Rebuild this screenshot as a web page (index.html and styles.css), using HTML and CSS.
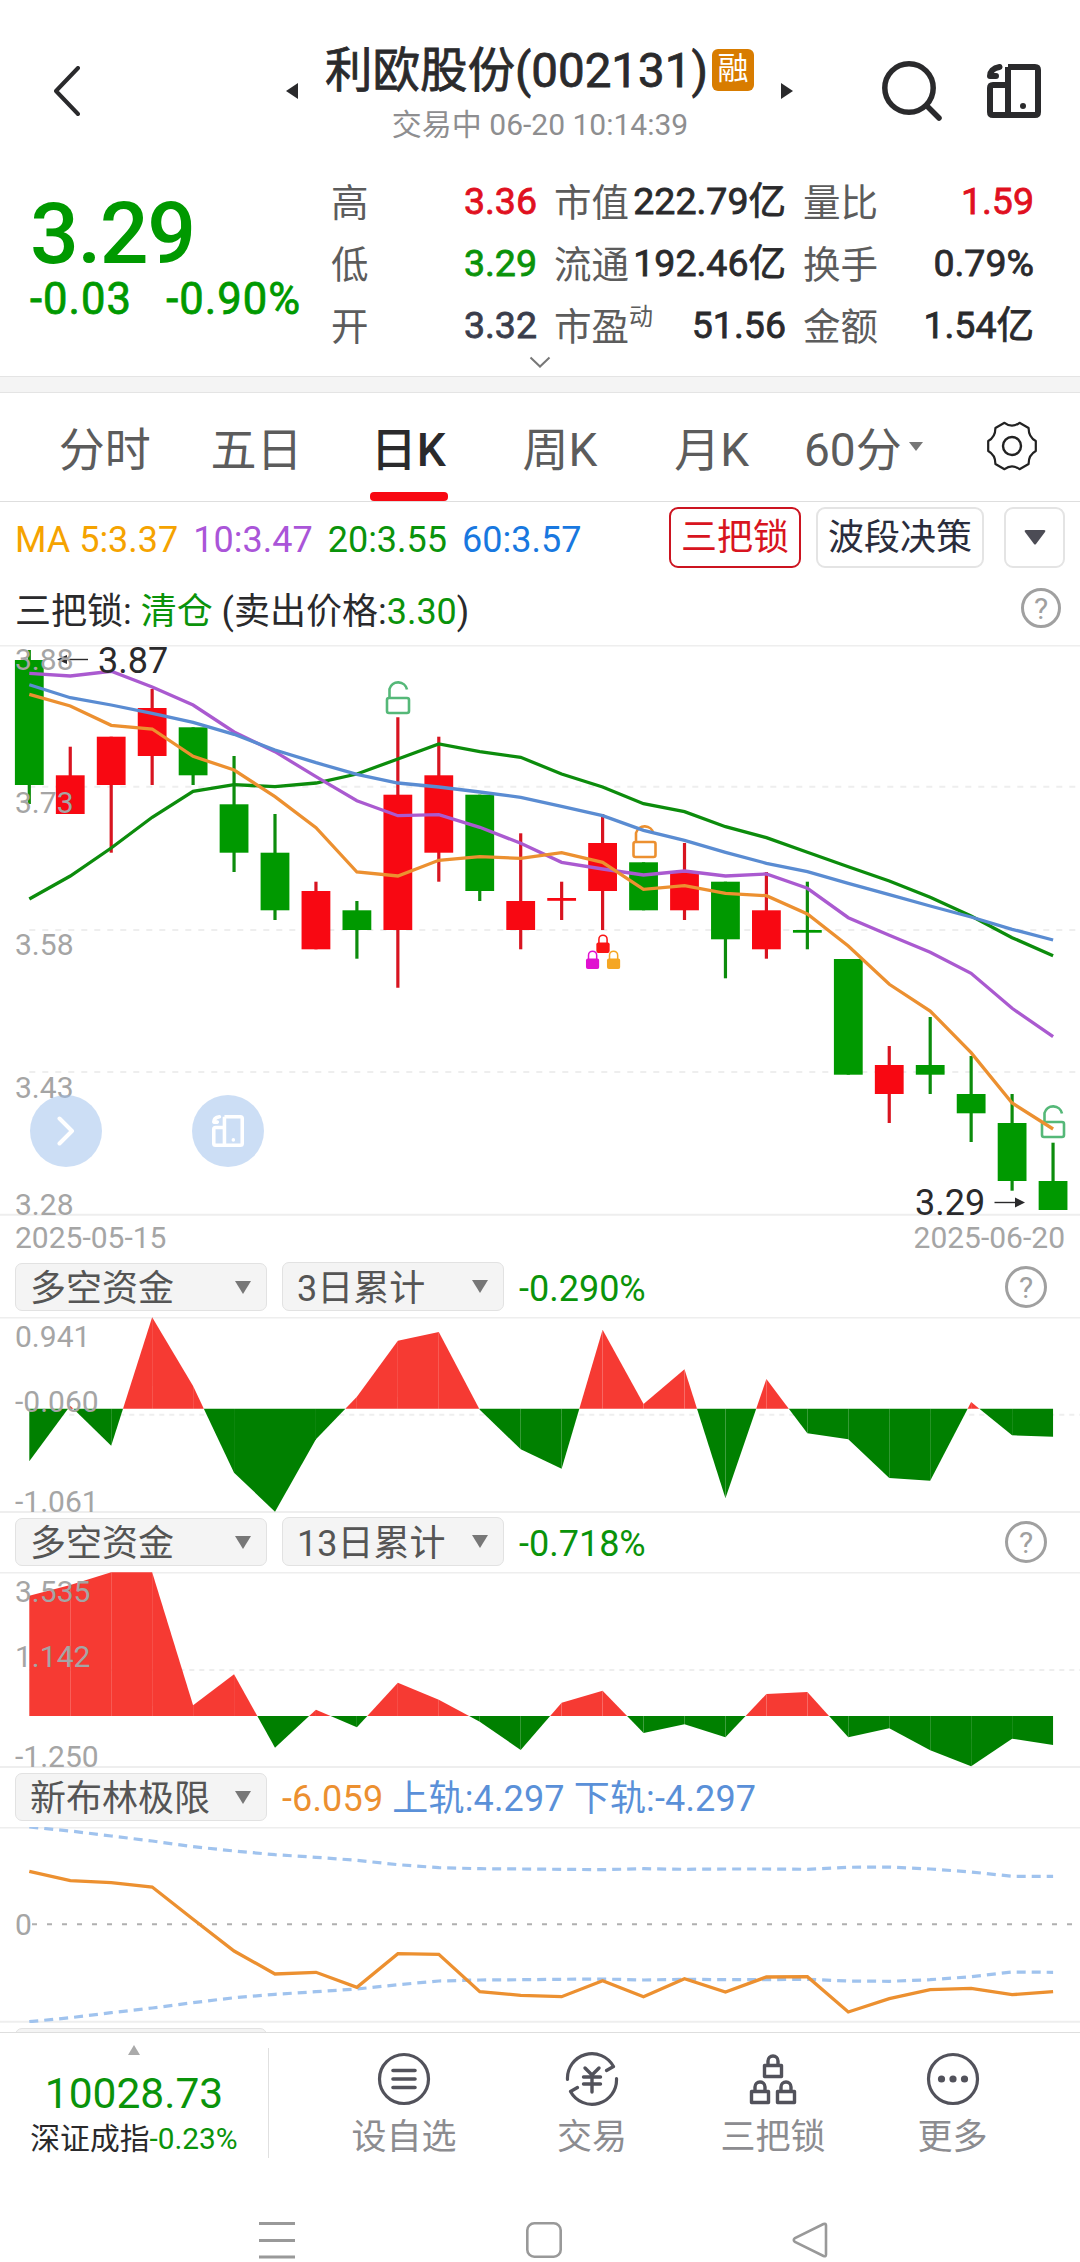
FILE: index.html
```html
<!DOCTYPE html>
<html lang="zh-CN">
<head>
    <meta charset="UTF-8">
    <meta name="viewport" content="width=device-width, initial-scale=1.0">
    <title>利欧股份(002131)</title>
    <link rel="stylesheet" href="styles.css">
</head>
<body>
    <!-- Shared icons -->
    <svg class="icon-defs" width="0" height="0">
        <symbol id="icon-rotate" viewBox="0 0 54 54">
            <path d="M21 3H48Q51 3 51 6V48Q51 51 48 51H6Q3 51 3 48V24Q3 21 6 21H21M21 3V51" fill="none" stroke="currentColor" stroke-width="6"/>
            <path d="M12.500 3C6 4 3 8 3 12H9" fill="none" stroke="currentColor" stroke-width="6" stroke-linecap="round" stroke-linejoin="round"/>
            <circle cx="36" cy="42" r="3" fill="currentColor"/>
        </symbol>
        <symbol id="icon-open-lock" viewBox="0 0 26 38">
            <rect x="2" y="19" width="22" height="15" rx="2" fill="none" stroke="currentColor" stroke-width="2.600"/>
            <path d="M4.500 19V10A9 9 0 0 1 22 10.500" fill="none" stroke="currentColor" stroke-width="2.600"/>
        </symbol>
        <symbol id="icon-lock" viewBox="0 0 14 20">
            <rect x="0" y="9" width="14" height="11" rx="2" fill="currentColor"/>
            <path d="M2.700 10V5.500A4.300 4.300 0 0 1 11.300 5.500V10" fill="none" stroke="currentColor" stroke-width="1.600"/>
        </symbol>
    </svg>

    <header class="header">
        <svg class="back" width="26" height="50" viewBox="0 0 26 50"><path d="M24 2L2 25L24 48" fill="none" stroke="#2a2a2c" stroke-width="4" stroke-linecap="round" stroke-linejoin="round"/></svg>
        <svg class="prev" width="12" height="16" viewBox="0 0 12 16"><path d="M12 0V16L0 8Z" fill="#2a2a2c"/></svg>
        <div class="title">
            <h1>利欧股份(002131)<span class="badge">融</span></h1>
            <p>交易中 06-20 10:14:39</p>
        </div>
        <svg class="next" width="12" height="16" viewBox="0 0 12 16"><path d="M0 0V16L12 8Z" fill="#2a2a2c"/></svg>
        <svg class="search" width="60" height="60" viewBox="0 0 60 60"><g fill="none" stroke="#2a2a2c" stroke-width="5.500" stroke-linecap="round"><circle cx="27" cy="27" r="24.200"/><path d="M45 45L57 57"/></g></svg>
        <svg class="rotate" width="54" height="54"><use href="#icon-rotate"/></svg>
    </header>

    <section class="quote">
        <div class="price">
            <div class="price-now">3.29</div>
            <div class="price-change"><span>-0.03</span><span>-0.90%</span></div>
        </div>
        <div class="stats">
            <div class="stat"><label>高</label><b class="red">3.36</b></div>
            <div class="stat"><label>市值</label><b>222.79亿</b></div>
            <div class="stat"><label>量比</label><b class="red">1.59</b></div>
            <div class="stat"><label>低</label><b class="green">3.29</b></div>
            <div class="stat"><label>流通</label><b>192.46亿</b></div>
            <div class="stat"><label>换手</label><b>0.79%</b></div>
            <div class="stat"><label>开</label><b class="flat">3.32</b></div>
            <div class="stat"><label>市盈<sup>动</sup></label><b>51.56</b></div>
            <div class="stat"><label>金额</label><b>1.54亿</b></div>
        </div>
        <svg class="more" width="22" height="12" viewBox="0 0 22 12"><path d="M1.500 1.500L11 10.500L20.500 1.500" fill="none" stroke="#777" stroke-width="2"/></svg>
    </section>

    <nav class="tabs">
        <a class="tab">分时</a>
        <a class="tab">五日</a>
        <a class="tab active">日K</a>
        <a class="tab">周K</a>
        <a class="tab">月K</a>
        <a class="tab">60分<svg class="caret" width="14" height="9" viewBox="0 0 14 9"><path d="M0 0H14L7 9Z" fill="#777"/></svg></a>
        <svg class="gear" width="52" height="52" viewBox="-26 -26 52 52">
            <path d="M23.800 -5V5Q16.500 9 16.600 18L7.500 23.200Q0 17.500 -7.500 23.200L-16.600 18Q-16.500 9 -23.800 5V-5Q-16.500 -9 -16.600 -18L-7.500 -23.200Q0 -17.500 7.500 -23.200L16.600 -18Q16.500 -9 23.800 -5Z" fill="none" stroke="#222" stroke-width="2.200" stroke-linejoin="round"/>
            <circle r="9" fill="none" stroke="#222" stroke-width="2.400"/>
        </svg>
    </nav>

    <div class="ma-row">
        <div class="ma">
            <span class="ma5">MA 5:3.37</span>
            <span class="ma10">10:3.47</span>
            <span class="ma20">20:3.55</span>
            <span class="ma60">60:3.57</span>
        </div>
        <button class="btn btn-active">三把锁</button>
        <button class="btn btn-wave">波段决策</button>
        <button class="btn btn-drop"><svg width="22" height="17" viewBox="0 0 22 17"><path d="M2 1H20Q22 1 21 3L12 15Q11 16 10 15L1 3Q0 1 2 1Z" fill="#4c4c55"/></svg></button>
    </div>
    <div class="signal-row">
        <p>三把锁: <span class="signal">清仓</span> (卖出价格:<span class="signal">3.30</span>)</p>
        <span class="help">?</span>
    </div>

    <div class="kline">
        <svg id="kline" width="1080" height="571" viewBox="0 645 1080 571"></svg>
        <div class="float-btn float-next"><svg width="18" height="30" viewBox="0 0 18 30"><path d="M2.500 2.500L15 15L2.500 27.500" fill="none" stroke="#fff" stroke-width="4" stroke-linecap="round" stroke-linejoin="round"/></svg></div>
        <div class="float-btn float-rotate"><svg width="32" height="32"><use href="#icon-rotate"/></svg></div>
    </div>
    <div class="dates"><span>2025-05-15</span><span>2025-06-20</span></div>

    <section class="panel">
        <div class="panel-head">
            <div class="select select-name"><span>多空资金</span><i></i></div>
            <div class="select select-period"><span>3日累计</span><i></i></div>
            <span class="value green">-0.290%</span>
            <span class="help">?</span>
        </div>
        <svg id="flow3" width="1080" height="196" viewBox="0 1317 1080 196"></svg>
    </section>

    <section class="panel">
        <div class="panel-head">
            <div class="select select-name"><span>多空资金</span><i></i></div>
            <div class="select select-period"><span>13日累计</span><i></i></div>
            <span class="value green">-0.718%</span>
            <span class="help">?</span>
        </div>
        <svg id="flow13" width="1080" height="196" viewBox="0 1572 1080 196"></svg>
    </section>

    <section class="panel">
        <div class="panel-head">
            <div class="select select-name"><span>新布林极限</span><i></i></div>
            <span class="value boll"><em>-6.059</em> 上轨:4.297 下轨:-4.297</span>
        </div>
        <svg id="boll" width="1080" height="196" viewBox="0 1827 1080 196"></svg>
    </section>
    <div class="panel-cut"><div class="select select-name"></div></div>

    <footer class="toolbar">
        <div class="index">
            <svg class="index-up" width="14" height="10" viewBox="0 0 14 10"><path d="M7 0L13 10H1Z" fill="#aaa"/></svg>
            <div class="index-value">10028.73</div>
            <div class="index-name">深证成指<span>-0.23%</span></div>
        </div>
        <div class="tool">
            <svg width="54" height="54" viewBox="-27 -27 54 54"><g fill="none" stroke="#52525b" stroke-width="3.200" stroke-linecap="round"><circle r="24.500"/><path d="M-11 -8.500H11M-11 0H11M-11 8.500H11" stroke-width="3.600"/></g></svg>
            <span>设自选</span>
        </div>
        <div class="tool">
            <svg width="54" height="54" viewBox="-27 -27 54 54"><g fill="none" stroke="#52525b" stroke-width="3.200" stroke-linecap="round" stroke-linejoin="round"><path d="M-24.500 0.500A24.500 24.500 0 0 1 21.500 -12.500L14.500 -8.500M24.500 -0.500A24.500 24.500 0 0 1 -21.500 12.500L-14.500 8.500"/><path d="M-7 -11L0 -4L7 -11M0 -4V13M-8.500 -2H8.500M-8.500 5H8.500" stroke-width="3.400"/></g></svg>
            <span>交易</span>
        </div>
        <div class="tool">
            <svg width="54" height="54" viewBox="-27 -27 54 54"><g fill="none" stroke="#52525b" stroke-width="3.400" stroke-linejoin="round"><path d="M-8.500 -13.500H8.500V-2.500H-8.500ZM-5 -14V-18A5 5 0 0 1 5 -18V-14"/><path d="M-21.500 12.500H-4.500V23.500H-21.500ZM-18 12V8A5 5 0 0 1 -8 8V12"/><path d="M4.500 12.500H21.500V23.500H4.500ZM8 12V8A5 5 0 0 1 18 8V12"/></g></svg>
            <span>三把锁</span>
        </div>
        <div class="tool">
            <svg width="54" height="54" viewBox="-27 -27 54 54"><circle r="24.500" fill="none" stroke="#52525b" stroke-width="3.200"/><g fill="#52525b"><circle cx="-11.500" r="3.600"/><circle r="3.600"/><circle cx="11.500" r="3.600"/></g></svg>
            <span>更多</span>
        </div>
    </footer>

    <div class="system-nav">
        <svg width="36" height="37" viewBox="0 0 36 37"><path d="M0 1.500H36M0 18.500H36M0 35H36" stroke="#999" stroke-width="3"/></svg>
        <svg width="36" height="36" viewBox="0 0 36 36"><rect x="1.300" y="1.300" width="33.400" height="33.400" rx="7" fill="none" stroke="#999" stroke-width="2.600"/></svg>
        <svg width="36" height="36" viewBox="0 0 36 36"><path d="M31.500 2Q34 1 34 3.500V32.500Q34 35 31.500 34L3 20Q0.500 18 3 16Z" fill="none" stroke="#999" stroke-width="2.600"/></svg>
    </div>

    <script src="charts.js"></script>
</body>
</html>
```
FILE: styles.css
```css
* {
    margin: 0;
    padding: 0;
    box-sizing: border-box;
}

body {
    width: 1080px;
    height: 2262px;
    overflow: hidden;
    background: #fff;
    color: #2a2a2c;
    font-family: Roboto, 'Noto Sans CJK SC', sans-serif;
}

svg {
    display: block;
    flex-shrink: 0;
}

.icon-defs {
    position: absolute;
}

.red {
    color: #e01020;
}

.green {
    color: #0a930a;
}

/* Header */
.header {
    height: 158px;
    padding: 24px 39px 0 54px;
    display: flex;
    align-items: center;
}

.prev {
    margin-left: 206px;
}

.title {
    width: 430px;
    margin: 4px 26px 0 27px;
    text-align: center;
    white-space: nowrap;
}

.title h1 {
    display: flex;
    align-items: center;
    height: 64px;
    font-size: 47.5px;
    font-weight: 400;
    line-height: 64px;
    -webkit-text-stroke: 0.8px currentColor;
}

.badge {
    width: 42px;
    height: 42px;
    margin: -3px 1px 0 auto;
    border-radius: 6px;
    background: #d87c00;
    color: #fff;
    font-size: 31px;
    font-weight: 400;
    line-height: 40px;
    -webkit-text-stroke: 0;
}

.title p {
    height: 44px;
    color: #8e8e90;
    font-size: 30px;
    line-height: 44px;
}

.search {
    margin: -1px 0 0 89px;
}

.rotate {
    margin: 0 0 0 auto;
}

/* Quote */
.quote {
    height: 235px;
    padding: 12px 45px 0 30px;
    display: grid;
    grid-template-columns: 301px 1fr;
    grid-template-rows: 186px 22px 1fr;
    border-bottom: 1px solid #e4e4e4;
    background: linear-gradient(#fff 218px, #e4e4e4 218px, #e4e4e4 219px, #f4f4f4 219px);
}

.price {
    padding-top: 20px;
    color: #009900;
}

.price-now {
    height: 88px;
    font-size: 86px;
    font-weight: 500;
    line-height: 88px;
    letter-spacing: -1.5px;
}

.price-change {
    display: flex;
    justify-content: space-between;
    width: 271px;
    font-size: 43.5px;
    line-height: 44px;
    letter-spacing: 1px;
    white-space: nowrap;
    -webkit-text-stroke: 0.8px currentColor;
}

.stats {
    display: grid;
    grid-template-columns: 206px 232px 231px;
    grid-template-rows: repeat(3, 62px);
    column-gap: 17px;
}

.stat {
    display: flex;
    justify-content: space-between;
    font-size: 37.5px;
    line-height: 62px;
    white-space: nowrap;
}

.stat label {
    color: #5c5c5c;
    padding-top: 2px;
}

.stat b {
    font-weight: 400;
    -webkit-text-stroke: 0.8px currentColor;
}

.stat sup {
    display: inline-block;
    font-size: 24px;
    line-height: 24px;
    vertical-align: 15px;
}

.flat {
    color: #3a3d4c;
}

.more {
    grid-column: 1 / 3;
    margin: 0 0 0 499px;
}

/* Tabs */
.tabs {
    height: 109px;
    padding-left: 29px;
    display: grid;
    grid-template-columns: repeat(6, 151.7px) 1fr;
    align-items: center;
    justify-items: center;
    border-bottom: 1px solid #dedede;
}

.tab {
    height: 108px;
    display: flex;
    align-items: center;
    position: relative;
    color: #5c5c5c;
    font-size: 46px;
    padding-bottom: 2px;
}

.tab.active {
    color: #2a2a2c;
    font-weight: 500;
}

.tab.active::after {
    content: '';
    position: absolute;
    left: -1px;
    bottom: 0;
    width: 78px;
    height: 9px;
    border-radius: 4px;
    background: #f80812;
}

.caret {
    margin-left: 7px;
}

.gear {
    margin: -2px 0 0 5px;
}

/* Moving averages and buttons */
.ma-row {
    height: 71px;
    padding: 0 15px 0 15px;
    display: flex;
    align-items: center;
}

.ma {
    display: flex;
    gap: 15px;
    width: 654px;
    padding-top: 4px;
    font-size: 36px;
    white-space: nowrap;
}

.ma5 {
    color: #f5a300;
}

.ma10 {
    color: #aa55d8;
}

.ma20 {
    color: #0a930a;
}

.ma60 {
    color: #1878e0;
}

.btn {
    height: 61px;
    border: 2px solid #e4e4e4;
    border-radius: 9px;
    background: #fff;
    color: #2a2d3c;
    font-family: inherit;
    font-size: 36px;
    line-height: 56px;
    white-space: nowrap;
}

.btn-active {
    width: 132px;
    border-color: #cc1420;
    color: #d81420;
}

.btn-wave {
    width: 168px;
    margin-left: 15px;
}

.btn-drop {
    width: 61px;
    margin-left: auto;
    display: flex;
    align-items: center;
    justify-content: center;
}

.signal-row {
    height: 72px;
    padding: 0 19px 3px 15px;
    display: flex;
    align-items: center;
    justify-content: space-between;
    font-size: 36px;
}

.signal {
    color: #0a930a;
}

.help {
    width: 40px;
    height: 40px;
    border: 3px solid #a0a0a0;
    border-radius: 50%;
    color: #a0a0a0;
    font-size: 30px;
    line-height: 35px;
    text-align: center;
}

/* Candlestick chart */
.kline {
    height: 571px;
    position: relative;
}

.float-btn {
    width: 72px;
    height: 72px;
    position: absolute;
    top: 450px;
    display: flex;
    align-items: center;
    justify-content: center;
    border-radius: 50%;
    background: rgba(153, 189, 236, 0.5);
    color: #fff;
}

.float-next {
    left: 30px;
}

.float-rotate {
    left: 192px;
}

.dates {
    height: 46px;
    padding: 0 15px;
    display: flex;
    justify-content: space-between;
    color: #a5a5a5;
    font-size: 30px;
    line-height: 43px;
}

.axis {
    fill: #a5a5a5;
    font-size: 30px;
}

.mark {
    fill: #2a2a2c;
    font-size: 36px;
}

/* Indicator panels */
.panel {
    height: 255px;
}

.panel-head {
    height: 55px;
    padding: 1px 33px 0 15px;
    display: flex;
}

.select {
    height: 48px;
    padding: 0 15px 0 14px;
    display: flex;
    align-items: center;
    justify-content: space-between;
    border: 1px solid #e2e2e2;
    border-radius: 7px;
    background: #f4f4f4;
    color: #555;
    font-size: 36px;
    line-height: 48px;
    white-space: nowrap;
}

.select span {
    padding-top: 4px;
}

.select i {
    border: 8px solid transparent;
    border-top: 13px solid #777;
    border-bottom: 0;
}

.select-name {
    width: 252px;
}

.select-period {
    width: 222px;
    height: 49px;
    margin: -1px 0 0 15px;
}

.value {
    margin-left: 15px;
    font-size: 36px;
    line-height: 52px;
    white-space: nowrap;
}

.boll {
    color: #5a90d8;
    letter-spacing: 0.15px;
}

.boll em {
    color: #ec9030;
    font-style: normal;
}

.panel-head .help {
    width: 42px;
    height: 42px;
    margin: 3px 0 0 auto;
    line-height: 37px;
}

.panel-cut {
    height: 5px;
    padding: 1px 0 0 15px;
    overflow: hidden;
}

/* Bottom toolbar */
.toolbar {
    height: 142px;
    display: grid;
    grid-template-columns: 313px 182px 194px 168px 191px;
    border-top: 1px solid #dedede;
}

.index {
    width: 269px;
    height: 110px;
    margin-top: 15px;
    display: flex;
    flex-direction: column;
    align-items: center;
    border-right: 1px solid #e0e0e0;
}

.index-up {
    margin-top: -3px;
}

.index-value {
    margin-top: 15px;
    color: #0a930a;
    font-size: 42.5px;
    line-height: 48px;
}

.index-name {
    font-size: 29.800px;
    line-height: 42px;
    white-space: nowrap;
}

.index-name span {
    color: #0a930a;
}

.tool {
    padding-top: 19px;
    display: flex;
    flex-direction: column;
    align-items: center;
    color: #8c8c90;
    font-size: 35px;
    line-height: 40px;
}

.tool span {
    margin-top: 12px;
}

/* System navigation */
.system-nav {
    height: 88px;
    padding: 48px 252px 0 259px;
    display: flex;
    justify-content: space-between;
}
```
FILE: charts.js
```js
const NS = 'http://www.w3.org/2000/svg';
const START = 29.3;
const STEP = 40.95;
const RED = '#f80812';
const GREEN = '#009900';

const x = i => START + i * STEP;

function add(svg, tag, attrs, text) {
    const el = document.createElementNS(NS, tag);
    for (const key in attrs) {
        el.setAttribute(key, attrs[key]);
    }
    if (text) el.textContent = text;
    svg.appendChild(el);
}

function hline(svg, y, color, dash, from = 0) {
    add(svg, 'path', { d: `M${from} ${y}H1080`, stroke: color, 'stroke-width': 2, 'stroke-dasharray': dash || 'none' });
}

function line(svg, ys, color, width = 3.3, dash = 'none') {
    const points = ys.map((y, i) => `${x(i).toFixed(1)},${y}`).join(' ');
    add(svg, 'polyline', { points, fill: 'none', stroke: color, 'stroke-width': width, 'stroke-dasharray': dash });
}

// Candles: [up, high, body top, body bottom, low]
const candles = [
    [0, 650, 660, 785, 804], [1, 746.7, 775.3, 814, 814], [1, 736.7, 736.7, 785, 852.7],
    [1, 689, 708, 756, 785], [0, 727.3, 727.3, 775.3, 785], [0, 756, 804.3, 852.7, 872],
    [0, 814, 852.7, 910.3, 920], [1, 881.7, 891, 949.3, 949.3], [0, 901, 910.3, 930, 958.7],
    [1, 717.3, 794.7, 930, 987.7], [1, 736.7, 775.3, 852.7, 881.7], [0, 794.7, 794.7, 891, 901],
    [1, 833.3, 901, 930, 949.3], [1, 881.7, 898, 900.8, 920], [1, 814, 843, 891, 930],
    [0, 862.3, 862.3, 910.3, 910.3], [1, 843, 872, 910.3, 920], [0, 881.7, 881.7, 939.3, 978.3],
    [1, 872, 910.3, 949.3, 958.7], [0, 881.7, 930, 932.7, 949.3], [0, 959, 959, 1074.7, 1074.7],
    [1, 1046, 1065, 1094, 1123], [0, 1017, 1065, 1074.7, 1094], [0, 1056, 1094, 1113.3, 1142],
    [0, 1094, 1123, 1181, 1190.7], [0, 1142.7, 1181, 1210, 1210]
];

const ma5 = [694.3, 706, 725.3, 729, 756.3, 770, 796.7, 827.7, 872, 876, 860.3, 856.7, 858.3, 852.7, 862.3, 889.3, 885.7, 893.3, 895.7, 914, 946, 984.3, 1011, 1052.7, 1103, 1129];
const ma10 = [673.3, 676, 671.3, 687, 705, 732, 751.7, 776.7, 800.7, 815.7, 814.7, 827.3, 843.3, 862.3, 869, 875, 871, 876, 874, 888.3, 917.7, 935.3, 952.3, 973.3, 1008.3, 1036.7];
const ma20 = [899, 876, 848, 817.3, 791.3, 784.7, 786.7, 783, 774, 759, 744, 751.7, 757.3, 774, 787, 803.7, 811.7, 826.7, 837.7, 852.3, 866.7, 881, 897.3, 916, 937.7, 955.7];
const ma60 = [684.7, 697.7, 705, 713.3, 722.3, 734.3, 750, 762.7, 774.3, 783, 787, 792, 797.3, 806.3, 815.7, 830.3, 840.3, 852.3, 863.3, 871.7, 883.3, 894.7, 906, 917, 929.3, 940];

function openLock(svg, cx, top, color) {
    add(svg, 'use', { href: '#icon-open-lock', x: cx - 13, y: top, width: 26, height: 38, color });
}

function drawKline() {
    const svg = document.getElementById('kline');
    hline(svg, 645.5, '#eeeeee');
    [786.7, 930, 1072].forEach(y => hline(svg, y, '#eeeeee', '6 7', START));
    hline(svg, 1214.7, '#eeeeee');

    candles.forEach(([up, high, top, bottom, low], i) => {
        add(svg, 'path', { d: `M${x(i)} ${high}V${low}`, stroke: up ? '#d81420' : '#0c8c0c', 'stroke-width': 3.2 });
        add(svg, 'rect', { x: x(i) - 14.4, y: top, width: 28.8, height: bottom - top, fill: up ? RED : GREEN });
    });

    openLock(svg, 398, 679, '#55b878');
    openLock(svg, 644.5, 823, '#ec9030');
    openLock(svg, 1053, 1103, '#55b878');
    [[596, 934, '#fa1414'], [585.6, 950, '#e010d0'], [606.6, 950, '#f5a623']].forEach(([lx, ly, color]) => {
        add(svg, 'use', { href: '#icon-lock', x: lx, y: ly, width: 14, height: 19, color });
    });

    line(svg, ma20, '#0c8c0c');
    line(svg, ma10, '#aa5ad0');
    line(svg, ma60, '#5a8cd2');
    line(svg, ma5, '#ec9030');

    // High and low markers
    add(svg, 'path', { d: 'M88 659.5H62', stroke: '#2a2a2c', 'stroke-width': 1.4 });
    add(svg, 'path', { d: 'M57 659.5L67 655V664Z', fill: '#2a2a2c' });
    add(svg, 'text', { x: 98, y: 672.7, class: 'mark' }, '3.87');
    add(svg, 'text', { x: 915, y: 1215, class: 'mark' }, '3.29');
    add(svg, 'path', { d: 'M994.5 1202.5H1018', stroke: '#2a2a2c', 'stroke-width': 1.4 });
    add(svg, 'path', { d: 'M1025 1202.5L1015 1197.5V1207.5Z', fill: '#2a2a2c' });

    [['3.88', 669.7], ['3.73', 812.7], ['3.58', 954.5], ['3.43', 1097.7], ['3.28', 1215]].forEach(([t, y]) => {
        add(svg, 'text', { x: 15, y, class: 'axis' }, t);
    });
}

// Red area above the zero line, green area below it
function drawFlow(id, ys, zero, grid, labels) {
    const svg = document.getElementById(id);
    const top = svg.viewBox.baseVal.y;
    hline(svg, top + 0.5, '#eeeeee');
    hline(svg, grid, '#eeeeee', '5 5', START);
    hline(svg, top + 195, '#eeeeee');

    for (let i = 0; i < ys.length - 1; i++) {
        const a = ys[i] - zero;
        const b = ys[i + 1] - zero;
        const color = v => (v < 0 ? '#f63a33' : '#008000');
        if (a * b < 0) {
            const cross = x(i) + STEP * a / (a - b);
            add(svg, 'polygon', { points: `${x(i)},${zero} ${x(i)},${ys[i]} ${cross},${zero}`, fill: color(a) });
            add(svg, 'polygon', { points: `${cross},${zero} ${x(i + 1)},${ys[i + 1]} ${x(i + 1)},${zero}`, fill: color(b) });
        } else {
            add(svg, 'polygon', { points: `${x(i)},${zero} ${x(i)},${ys[i]} ${x(i + 1)},${ys[i + 1]} ${x(i + 1)},${zero}`, fill: color(a || b) });
        }
    }
    labels.forEach(([t, y]) => add(svg, 'text', { x: 15, y, class: 'axis' }, t));
}

function drawBoll() {
    const svg = document.getElementById('boll');
    hline(svg, 1827.5, '#eeeeee');
    hline(svg, 2021.7, '#eeeeee');
    hline(svg, 1924.3, '#b0b0b0', '5 10', 32);
    line(svg, [1827, 1831, 1836, 1841, 1846.7, 1851, 1854.7, 1857.3, 1860.3, 1864.7, 1867.7, 1868.7, 1869, 1869.3, 1869.7, 1868.7, 1869.3, 1869, 1869, 1869.3, 1867.3, 1867, 1869, 1872, 1876.3, 1876.3], '#a0c3ee', 3.2, '9 6');
    line(svg, [2021.7, 2017.7, 2012.7, 2008, 2002.7, 1997.7, 1994.3, 1991.7, 1989, 1984.7, 1981, 1980, 1979.7, 1979.3, 1979, 1980, 1979.3, 1979.7, 1979.7, 1979.3, 1981, 1981.3, 1979.7, 1976.7, 1972, 1972.3], '#a0c3ee', 3.2, '9 6');
    line(svg, [1871.3, 1880.7, 1882.7, 1887, 1919.3, 1951, 1974, 1972.3, 1987.3, 1953.7, 1954.3, 1991.7, 1995.3, 1996.7, 1980.7, 1996.7, 1978.7, 1992, 1977, 1976.7, 2012, 1998.7, 1989.7, 1988.3, 1994.7, 1991.7], '#ec9030');
    add(svg, 'text', { x: 15, y: 1935, class: 'axis' }, '0');
}

drawKline();
drawFlow('flow3',
    [1461.3, 1405.7, 1445.7, 1317.3, 1386, 1472.7, 1511.7, 1439.3, 1396.7, 1340.7, 1332, 1409.7, 1449.3, 1468.7, 1329.7, 1404, 1369.3, 1498.3, 1379, 1433.3, 1439.3, 1478, 1480.7, 1402, 1435.3, 1436.7],
    1408.7, 1414.8, [['0.941', 1346.7], ['-0.060', 1412], ['-1.061', 1511.7]]);
drawFlow('flow13',
    [1595.7, 1585, 1572.3, 1572.3, 1705.3, 1674.3, 1747.7, 1709.7, 1727.3, 1682.7, 1699.7, 1721.7, 1750, 1702.7, 1690.7, 1733, 1724.3, 1737.3, 1694, 1692, 1737.3, 1728.3, 1750.3, 1766.3, 1738.7, 1745],
    1716, 1670, [['3.535', 1601.7], ['1.142', 1666.7], ['-1.250', 1766.7]]);
drawBoll();
```
